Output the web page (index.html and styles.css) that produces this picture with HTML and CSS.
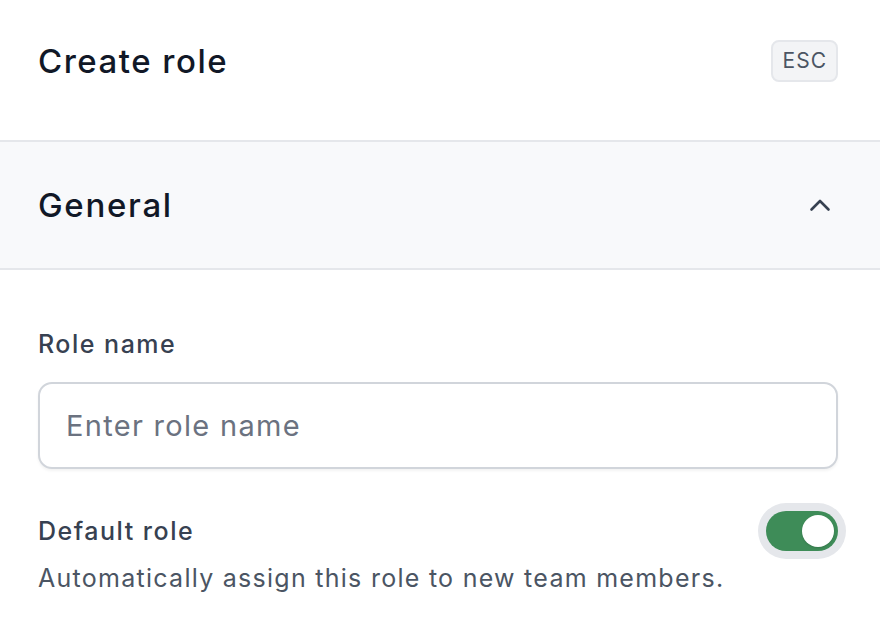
FILE: index.html
```html
<!DOCTYPE html>
<html lang="en">

<head>
    <meta charset="UTF-8">
    <meta name="viewport" content="width=device-width, initial-scale=1.0">
    <title>Create role</title>
    <link rel="stylesheet" href="styles.css">
</head>

<body>

    <div class="panel">
        <header class="panel-header">
            <h1>Create role</h1>
            <kbd class="esc">ESC</kbd>
        </header>

        <div class="section-head">
            <h2>General</h2>
            <svg class="chevron" width="20" height="12" viewBox="0 0 20 12" fill="none" stroke="currentColor"
                stroke-width="2.6" stroke-linecap="round" stroke-linejoin="round">
                <polyline points="1.5 10.5 10 2 18.5 10.5" />
            </svg>
        </div>

        <div class="section-body">
            <label class="field-label" for="roleName">Role name</label>
            <input type="text" id="roleName" class="text-input" placeholder="Enter role name">

            <div class="toggle-row">
                <div class="toggle-text">
                    <span class="field-label">Default role</span>
                    <p class="hint">Automatically assign this role to new team members.</p>
                </div>
                <button class="switch on" id="defaultRole" aria-pressed="true">
                    <span class="knob"></span>
                </button>
            </div>
        </div>
    </div>

</body>

</html>
```

FILE: styles.css
```css
* {
    box-sizing: border-box;
}

body {
    margin: 0;
    font-family: 'Inter', 'Noto Sans', sans-serif;
    background-color: #fff;
    color: #111827;
}

.panel {
    width: 880px;
}

.panel-header {
    display: flex;
    align-items: flex-start;
    justify-content: space-between;
    height: 142px;
    padding: 40px 42px 0 38px;
    border-bottom: 2px solid #e5e7eb;
}

h1 {
    margin: 0;
    font-size: 33px;
    line-height: 42px;
    font-weight: 500;
    letter-spacing: 1.5px;
}

.esc {
    font-family: inherit;
    font-size: 21px;
    letter-spacing: 1px;
    color: #4b5563;
    background-color: #f3f4f6;
    border: 2px solid #e5e7eb;
    border-radius: 8px;
    padding: 7px 9px 7px 10px;
    line-height: 24px;
}

.section-head {
    display: flex;
    align-items: center;
    justify-content: space-between;
    height: 128px;
    padding: 0 50px 0 38px;
    background-color: #f8f9fb;
    border-bottom: 2px solid #e5e7eb;
}

h2 {
    margin: 0;
    font-size: 33px;
    font-weight: 500;
    letter-spacing: 1.7px;
}

.chevron {
    color: #374151;
    overflow: visible;
}

.section-body {
    padding: 58px 42px 0 38px;
}

.field-label {
    display: block;
    font-size: 25px;
    font-weight: 500;
    letter-spacing: 1.5px;
    color: #374151;
    line-height: 32px;
}

.text-input {
    display: block;
    width: 100%;
    height: 87px;
    margin-top: 22px;
    padding: 0 26px;
    font-family: inherit;
    font-size: 29px;
    letter-spacing: 1.3px;
    color: #111827;
    border: 2px solid #d1d5db;
    border-radius: 14px;
    box-shadow: 0 2px 3px rgba(0, 0, 0, 0.05);
    outline: none;
}

.text-input::placeholder {
    color: #6b7280;
}

.toggle-row {
    display: flex;
    justify-content: space-between;
    align-items: flex-start;
    margin-top: 46px;
}

.hint {
    margin: 15px 0 0;
    font-size: 25px;
    letter-spacing: 1.27px;
    line-height: 32px;
    color: #4b5563;
}

/* switch track sits centred on the label line */
.switch {
    position: relative;
    flex-shrink: 0;
    width: 72px;
    height: 40px;
    margin: -4px 0 0;
    padding: 0;
    border: none;
    border-radius: 20px;
    background-color: #d1d5db;
    box-shadow: 0 0 0 8px #e5e7eb;
    cursor: pointer;
}

.switch.on {
    background-color: #3e8c58;
}

.knob {
    position: absolute;
    top: 4px;
    left: 4px;
    width: 32px;
    height: 32px;
    border-radius: 50%;
    background-color: #fff;
    box-shadow: 0 1px 2px rgba(0, 0, 0, 0.15);
}

.switch.on .knob {
    left: 36px;
}
```
